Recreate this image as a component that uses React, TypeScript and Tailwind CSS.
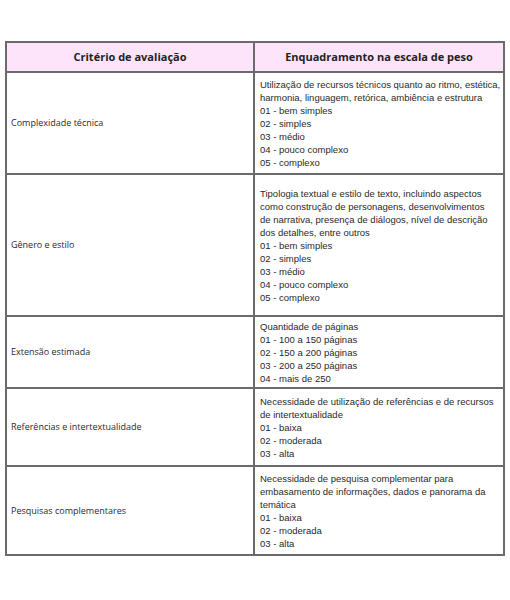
const rows = [
  {
    label: "Complexidade técnica",
    h: "h-[102px]",
    lines: [
      "Utilização de recursos técnicos quanto ao ritmo, estética,",
      "harmonia, linguagem, retórica, ambiência e estrutura",
      "01 - bem simples",
      "02 - simples",
      "03 - médio",
      "04 - pouco complexo",
      "05 - complexo",
    ],
  },
  {
    label: "Gênero e estilo",
    h: "h-[142px]",
    lines: [
      "Tipologia textual e estilo de texto, incluindo aspectos",
      "como construção de personagens, desenvolvimentos",
      "de narrativa, presença de diálogos, nível de descrição",
      "dos detalhes, entre outros",
      "01 - bem simples",
      "02 - simples",
      "03 - médio",
      "04 - pouco complexo",
      "05 - complexo",
    ],
  },
  {
    label: "Extensão estimada",
    h: "h-[72px]",
    lines: [
      "Quantidade de páginas",
      "01 - 100 a 150 páginas",
      "02 - 150 a 200 páginas",
      "03 - 200 a 250 páginas",
      "04 - mais de 250",
    ],
  },
  {
    label: "Referências e intertextualidade",
    h: "h-[78px]",
    lines: [
      "Necessidade de utilização de referências e de recursos",
      "de intertextualidade",
      "01 - baixa",
      "02 - moderada",
      "03 - alta",
    ],
  },
  {
    label: "Pesquisas complementares",
    h: "h-[87px]",
    lines: [
      "Necessidade de pesquisa complementar para",
      "embasamento de informações, dados e panorama da",
      "temática",
      "01 - baixa",
      "02 - moderada",
      "03 - alta",
    ],
  },
];

const App = () => {
  return (
    <div className="w-[510px] h-[600px] bg-white pt-[41px] pl-[5px]">
      <div className="w-[500px] border-2 border-[#6b6b6b] flex flex-col">
        <div className="h-[30px] flex bg-[#fde4fb] border-b-2 border-[#6b6b6b] font-['Open_Sans',sans-serif] font-bold text-[11px] text-[#222]">
          <div className="w-[248px] shrink-0 border-r-2 border-[#6b6b6b] flex items-center justify-center">Critério de avaliação</div>
          <div className="flex-1 min-w-0 flex items-center justify-center">Enquadramento na escala de peso</div>
        </div>
        {rows.map((r, i) => (
          <div key={r.label} className={`${r.h} flex ${i < rows.length - 1 ? "border-b-2 border-[#6b6b6b]" : ""}`}>
            <div className="w-[248px] shrink-0 border-r-2 border-[#6b6b6b] flex items-center pl-[4px] font-['Open_Sans',sans-serif] text-[9px] text-[#2a2a2a]">
              {r.label}
            </div>
            <div className="flex-1 min-w-0 flex flex-col justify-center pl-[5px] font-['Liberation_Sans',Arial,sans-serif] text-[9.5px] leading-[13px] text-[#2a2a2a] whitespace-nowrap">
              {r.lines.map(l => (
                <div key={l}>{l}</div>
              ))}
            </div>
          </div>
        ))}
      </div>
    </div>
  );
};

export default App;
